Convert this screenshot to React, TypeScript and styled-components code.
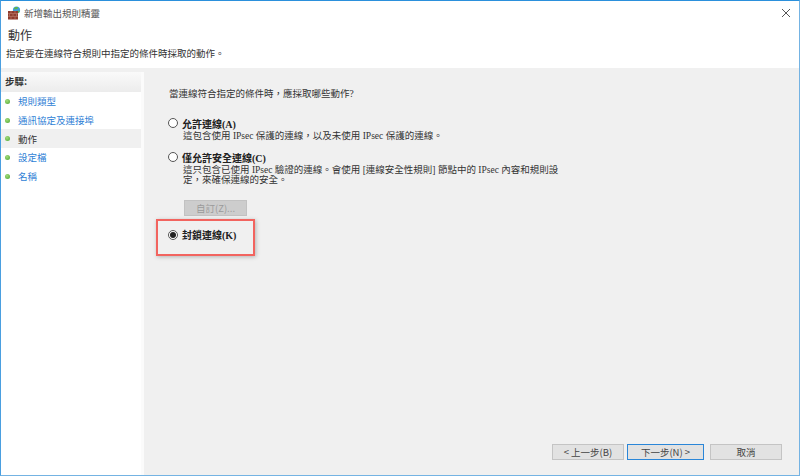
import styled, { createGlobalStyle } from "styled-components";

const GlobalStyle = createGlobalStyle`
  html, body {
    margin: 0;
    padding: 0;
    background: #fff;
  }
  body {
    font-family: "Liberation Serif", "Noto Sans CJK TC", serif;
    font-size: 9.5px;
    color: #333;
  }
`;

const Window = styled.div`
  width: 800px;
  height: 476px;
  box-sizing: border-box;
  border: 1px solid #74b3e3;
  border-top: 1.5px solid #2b90dc;
  border-left-color: #4a9fe0;
  background: #f0f0f0;
  display: flex;
  flex-direction: column;
  overflow: hidden;
`;

const TitleBar = styled.div`
  height: 23px;
  flex: none;
  background: #fff;
  display: flex;
  align-items: center;
  padding: 0 9px 0 6px;
  gap: 3px;
`;

const TitleText = styled.span`
  flex: 1;
  font-family: "Noto Sans CJK TC", sans-serif;
  font-size: 9.5px;
  color: #555;
`;

const Header = styled.div`
  height: 44px;
  flex: none;
  background: #fff;
  box-sizing: border-box;
  padding: 2px 5px 0;
`;

const HeaderTitle = styled.div`
  font-family: "Noto Sans CJK TC", sans-serif;
  font-size: 12px;
  line-height: 18px;
  padding-left: 2px;
  color: #333;
`;

const HeaderSub = styled.div`
  font-family: "Noto Sans CJK TC", sans-serif;
  font-size: 9.5px;
  line-height: 14px;
  margin-top: 2px;
  color: #333;
`;

const Body = styled.div`
  flex: 1;
  display: flex;
  padding-top: 3px;
  min-height: 0;
`;

const Sidebar = styled.div`
  width: 140px;
  flex: none;
  background: #fff;
  border-right: 3px solid #fbfbfb;
  margin-top: 1px;
`;

const StepsHeader = styled.div`
  height: 20px;
  box-sizing: border-box;
  padding: 0 4px;
  line-height: 19px;
  font-family: "Noto Sans CJK TC", sans-serif;
  font-weight: 700;
  font-size: 9.5px;
  color: #333;
  background: linear-gradient(#fafafa, #ececec);
`;

const StepList = styled.div`
  padding-top: 0;
`;

const StepRow = styled.div<{ $active?: boolean }>`
  height: 18.7px;
  display: flex;
  align-items: center;
  padding-left: 4px;
  gap: 8px;
  font-family: "Noto Sans CJK TC", sans-serif;
  font-size: 9.5px;
  color: ${(p) => (p.$active ? "#333" : "#2f7fd6")};
  background: ${(p) => (p.$active ? "#f0f0f0" : "transparent")};
`;

const StepDot = styled.span`
  width: 5px;
  height: 5px;
  border-radius: 50%;
  flex: none;
  background: radial-gradient(circle at 40% 35%, #a4dc7c, #4aa52e);
`;

const Panel = styled.div`
  flex: 1;
  display: flex;
  flex-direction: column;
  padding: 16px 17px 15px 24px;
  min-width: 0;
`;

const Question = styled.div`
  line-height: 14px;
  padding-left: 1px;
  margin-bottom: 15px;
`;

const Option = styled.div<{ $gap: number }>`
  position: relative;
  margin-bottom: ${(p) => p.$gap}px;
`;

const OptionLabel = styled.label`
  display: flex;
  align-items: center;
  gap: 4px;
  height: 14px;
  font-weight: 700;
  font-size: 10px;
  color: #222;
`;

const Radio = styled.span<{ $checked?: boolean }>`
  width: 10px;
  height: 10px;
  box-sizing: border-box;
  flex: none;
  border: 1px solid #555;
  border-radius: 50%;
  background: #fff;
  display: flex;
  align-items: center;
  justify-content: center;
  &::after {
    content: "";
    width: 6px;
    height: 6px;
    border-radius: 50%;
    background: ${(p) => (p.$checked ? "#222" : "transparent")};
  }
`;

const OptionDesc = styled.div`
  margin-left: 15px;
  width: 385px;
  line-height: 10px;
  margin-top: 1px;
  color: #333;
`;

const CustomButton = styled.button`
  display: block;
  width: 63px;
  height: 16px;
  margin: 0 0 12px 16px;
  padding: 0;
  border: 1px solid #c2c2c2;
  background: #cdcdcd;
  color: #9a9a9a;
  font-family: "Noto Sans CJK TC", sans-serif;
  font-size: 9.5px;
`;

const Callout = styled.div`
  position: absolute;
  left: -12px;
  top: -9px;
  width: 95px;
  height: 33px;
  border: 2px solid #f2645f;
  box-shadow: 1px 1px 4px rgba(0, 0, 0, 0.25);
  pointer-events: none;
`;

const Footer = styled.div`
  margin-top: auto;
  display: flex;
  justify-content: flex-end;
  gap: 3px;
`;

const FooterButton = styled.button<{ $primary?: boolean; $w: number; $ml?: number }>`
  width: ${(p) => p.$w}px;
  height: 16px;
  margin-left: ${(p) => p.$ml ?? 0}px;
  padding: 0;
  box-sizing: border-box;
  border: ${(p) => (p.$primary ? "1.5px solid #2a86d8" : "1px solid #c4c4c4")};
  background: #e2e2e2;
  color: #444;
  font-family: "Noto Sans CJK TC", sans-serif;
  font-size: 9.5px;
  line-height: 13px;
`;

function WizardIcon() {
  return (
    <svg width="14" height="14" viewBox="0 0 14 14">
      <circle cx="9.5" cy="4" r="3.6" fill="#3f9fd8" />
      <path d="M7 2.5c1-1.5 3-1.8 4-1 .3 1-.8 1.4-1.6 1.6-.8.3-1.6.6-2.4-.6z" fill="#5fb548" />
      <path d="M10 5c1-.4 2-.3 2.8 0-.3 1.3-1.3 2.2-2.4 2.4z" fill="#5fb548" />
      <rect x="1" y="5" width="10" height="8.5" fill="#8e3b2c" />
      <path
        d="M1 7.6h10M1 10.4h10M4 5v2.6M8 5v2.6M2.5 7.6v2.8M6 7.6v2.8M9.5 7.6v2.8M4 10.4v3.1M8 10.4v3.1"
        stroke="#c98f7f"
        strokeWidth="0.5"
        fill="none"
      />
    </svg>
  );
}

function CloseIcon() {
  return (
    <svg width="8" height="8" viewBox="0 0 8 8">
      <path d="M0 0l8 8M8 0L0 8" stroke="#555" strokeWidth="1" fill="none" />
    </svg>
  );
}

const steps = ["規則類型", "通訊協定及連接埠", "動作", "設定檔", "名稱"];

function App() {
  return (
    <>
      <GlobalStyle />
      <Window>
        <TitleBar>
          <WizardIcon />
          <TitleText>新增輸出規則精靈</TitleText>
          <CloseIcon />
        </TitleBar>
        <Header>
          <HeaderTitle>動作</HeaderTitle>
          <HeaderSub>指定要在連線符合規則中指定的條件時採取的動作。</HeaderSub>
        </Header>
        <Body>
          <Sidebar>
            <StepsHeader>步驟:</StepsHeader>
            <StepList>
              {steps.map((step) => (
                <StepRow key={step} $active={step === "動作"}>
                  <StepDot />
                  {step}
                </StepRow>
              ))}
            </StepList>
          </Sidebar>
          <Panel>
            <Question>當連線符合指定的條件時&#xFF0C;應採取哪些動作?</Question>
            <Option $gap={9}>
              <OptionLabel>
                <Radio />
                允許連線(A)
              </OptionLabel>
              <OptionDesc>這包含使用 IPsec 保護的連線&#xFF0C;以及未使用 IPsec 保護的連線。</OptionDesc>
            </Option>
            <Option $gap={14.5}>
              <OptionLabel>
                <Radio />
                僅允許安全連線(C)
              </OptionLabel>
              <OptionDesc>
                這只包含已使用 IPsec 驗證的連線。會使用 [連線安全性規則] 節點中的 IPsec 內容和規則設定&#xFF0C;來確保連線的安全。
              </OptionDesc>
            </Option>
            <CustomButton disabled>自訂(Z)...</CustomButton>
            <Option $gap={0}>
              <OptionLabel>
                <Radio $checked />
                封鎖連線(K)
              </OptionLabel>
              <Callout />
            </Option>
            <Footer>
              <FooterButton $w={72}>&lt; 上一步(B)</FooterButton>
              <FooterButton $w={77} $primary>
                下一步(N) &gt;
              </FooterButton>
              <FooterButton $w={72} $ml={3}>
                取消
              </FooterButton>
            </Footer>
          </Panel>
        </Body>
      </Window>
    </>
  );
}

export default App;
